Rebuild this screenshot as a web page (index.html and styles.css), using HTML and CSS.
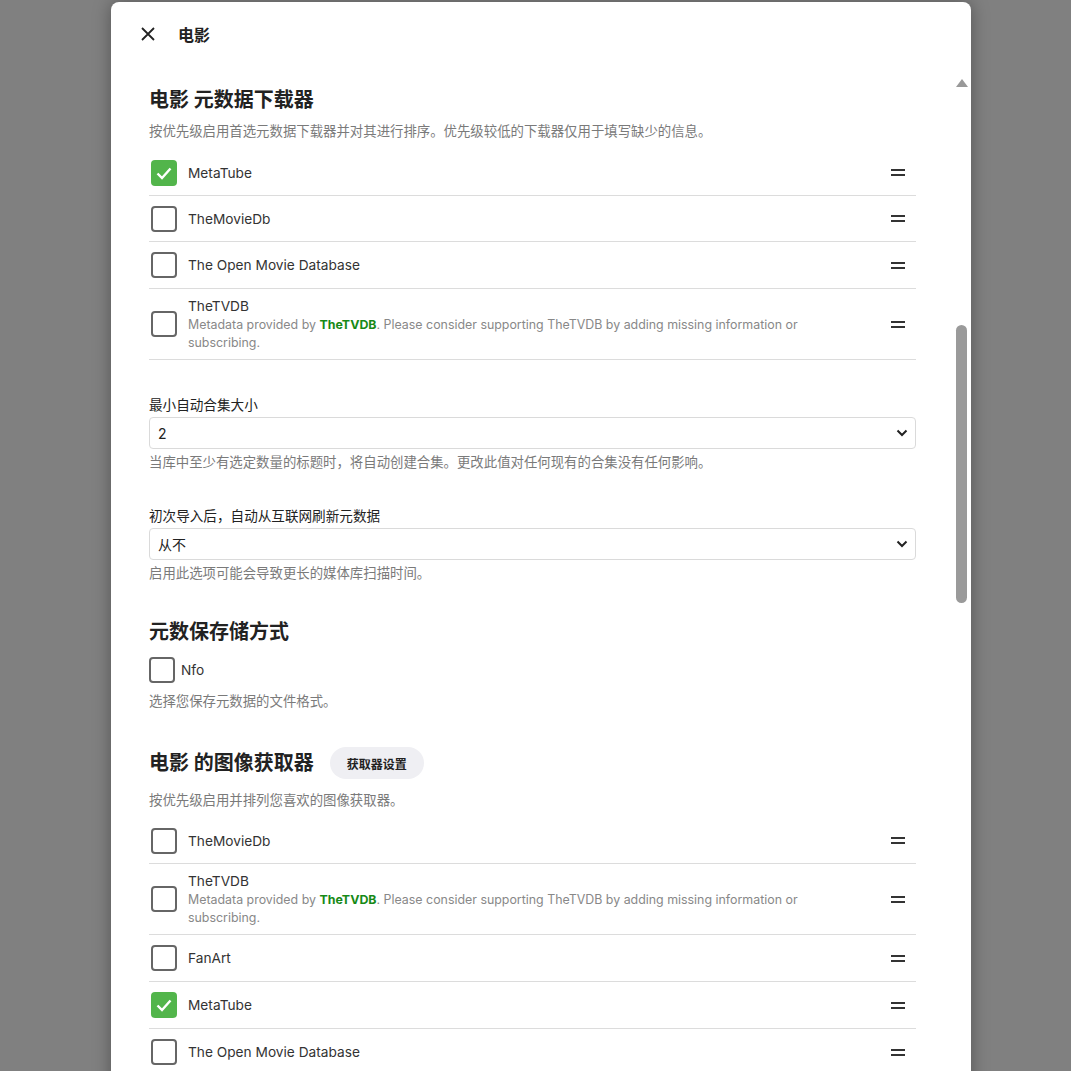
FILE: index.html
```html
<!DOCTYPE html>
<html lang="zh-CN">
<head>
    <meta charset="UTF-8">
    <meta name="viewport" content="width=device-width, initial-scale=1.0">
    <title>电影 - 媒体库设置</title>
    <link rel="stylesheet" href="styles.css">
</head>
<body>

    <div class="dialog">
        <div class="dialog-header">
            <button class="btn-close" type="button" aria-label="关闭">
                <svg width="16" height="16" viewBox="0 0 16 16"><path d="M2 2 L14 14 M14 2 L2 14" stroke="#222" stroke-width="1.8" fill="none"/></svg>
            </button>
            <h2 class="dialog-title">电影</h2>
        </div>

        <!-- fake scrollbar, drawn over the dialog edge -->
        <div class="scroll-arrow"></div>
        <div class="scroll-thumb"></div>

        <div class="dialog-content">

            <h3 class="section-title">电影 元数据下载器</h3>
            <div class="field-desc first">按优先级启用首选元数据下载器并对其进行排序。优先级较低的下载器仅用于填写缺少的信息。</div>

            <div class="check-list">
                <div class="list-item">
                    <span class="checkbox checked"><svg width="20" height="20" viewBox="0 0 20 20"><path d="M3.5 10.5 L8 15 L16.5 5.5" stroke="#fff" stroke-width="2.4" fill="none"/></svg></span>
                    <div class="item-body"><div class="item-name">MetaTube</div></div>
                    <span class="drag-handle"></span>
                </div>
                <div class="list-item">
                    <span class="checkbox"></span>
                    <div class="item-body"><div class="item-name">TheMovieDb</div></div>
                    <span class="drag-handle"></span>
                </div>
                <div class="list-item">
                    <span class="checkbox"></span>
                    <div class="item-body"><div class="item-name">The Open Movie Database</div></div>
                    <span class="drag-handle"></span>
                </div>
                <div class="list-item">
                    <span class="checkbox"></span>
                    <div class="item-body">
                        <div class="item-name">TheTVDB</div>
                        <div class="item-note">Metadata provided by <a class="tvdb-link" href="#">TheTVDB</a>. Please consider supporting TheTVDB by adding missing information or subscribing.</div>
                    </div>
                    <span class="drag-handle"></span>
                </div>
            </div>

            <div class="select-field">
                <label class="field-label">最小自动合集大小</label>
                <div class="select-wrap">
                    <select class="select-box">
                        <option>2</option>
                    </select>
                    <svg class="select-arrow" width="12" height="8" viewBox="0 0 12 8"><path d="M1.5 1.5 L6 6 L10.5 1.5" stroke="#222" stroke-width="2" fill="none"/></svg>
                </div>
                <div class="field-desc">当库中至少有选定数量的标题时，将自动创建合集。更改此值对任何现有的合集没有任何影响。</div>
            </div>

            <div class="select-field">
                <label class="field-label">初次导入后，自动从互联网刷新元数据</label>
                <div class="select-wrap">
                    <select class="select-box">
                        <option>从不</option>
                    </select>
                    <svg class="select-arrow" width="12" height="8" viewBox="0 0 12 8"><path d="M1.5 1.5 L6 6 L10.5 1.5" stroke="#222" stroke-width="2" fill="none"/></svg>
                </div>
                <div class="field-desc">启用此选项可能会导致更长的媒体库扫描时间。</div>
            </div>

            <h3 class="section-title spaced">元数保存储方式</h3>
            <div class="single-check">
                <span class="checkbox"></span>
                <span class="item-name">Nfo</span>
            </div>
            <div class="field-desc after-check">选择您保存元数据的文件格式。</div>

            <div class="title-row">
                <h3 class="section-title">电影 的图像获取器</h3>
                <button class="btn-pill" type="button">获取器设置</button>
            </div>
            <div class="field-desc tight">按优先级启用并排列您喜欢的图像获取器。</div>

            <div class="check-list">
                <div class="list-item">
                    <span class="checkbox"></span>
                    <div class="item-body"><div class="item-name">TheMovieDb</div></div>
                    <span class="drag-handle"></span>
                </div>
                <div class="list-item">
                    <span class="checkbox"></span>
                    <div class="item-body">
                        <div class="item-name">TheTVDB</div>
                        <div class="item-note">Metadata provided by <a class="tvdb-link" href="#">TheTVDB</a>. Please consider supporting TheTVDB by adding missing information or subscribing.</div>
                    </div>
                    <span class="drag-handle"></span>
                </div>
                <div class="list-item">
                    <span class="checkbox"></span>
                    <div class="item-body"><div class="item-name">FanArt</div></div>
                    <span class="drag-handle"></span>
                </div>
                <div class="list-item">
                    <span class="checkbox checked"><svg width="20" height="20" viewBox="0 0 20 20"><path d="M3.5 10.5 L8 15 L16.5 5.5" stroke="#fff" stroke-width="2.4" fill="none"/></svg></span>
                    <div class="item-body"><div class="item-name">MetaTube</div></div>
                    <span class="drag-handle"></span>
                </div>
                <div class="list-item">
                    <span class="checkbox"></span>
                    <div class="item-body"><div class="item-name">The Open Movie Database</div></div>
                    <span class="drag-handle"></span>
                </div>
            </div>

        </div>
    </div>

</body>
</html>
```

FILE: styles.css
```css
/* Page is the dimmed backdrop behind the dialog */
html, body {
    margin: 0;
    padding: 0;
    height: 100%;
    overflow: hidden;
}

body {
    background: #808080;
    font-family: Inter, "Noto Sans CJK SC", sans-serif;
    color: #222;
}

.dialog {
    position: relative;
    width: 860px;
    height: 1200px;
    margin: 2px 0 0 111px;
    background: #fff;
    border-radius: 8px;
    box-shadow: 0 0 18px rgba(0, 0, 0, 0.35);
}

.dialog-header {
    display: flex;
    align-items: center;
    height: 64px;
    padding-left: 26px;
}

.btn-close {
    display: flex;
    align-items: center;
    justify-content: center;
    width: 22px;
    height: 22px;
    padding: 0;
    border: none;
    background: none;
}

.dialog-title {
    margin: 0 0 0 19px;
    font-size: 16px;
    font-weight: 600;
}

/* scrollbar pieces */
.scroll-arrow {
    position: absolute;
    top: 77px;
    left: 845px;
    width: 0;
    height: 0;
    border-left: 6px solid transparent;
    border-right: 6px solid transparent;
    border-bottom: 8px solid #999;
}

.scroll-thumb {
    position: absolute;
    top: 323px;
    left: 845px;
    width: 11px;
    height: 278px;
    border-radius: 6px;
    background: #9a9a9a;
}

.dialog-content {
    width: 767px;
    padding: 20px 0 0 38px;
}

.section-title {
    margin: 0;
    font-size: 20px;
    line-height: 28px;
    font-weight: 700;
}

.section-title.spaced {
    margin-top: 36px;
}

.field-desc {
    font-size: 13.4px;
    line-height: 18px;
    color: #7a7a7a;
    margin-top: 4px;
}

.field-desc.first {
    margin-top: 8px;
    margin-bottom: 10px;
}

.field-desc.after-check {
    margin-top: 9px;
}

.field-desc.tight {
    margin-top: 12px;
    margin-bottom: 9px;
}

/* provider lists */
.list-item {
    display: flex;
    align-items: center;
    box-sizing: border-box;
    min-height: 46px;
    padding: 7px 0;
    border-bottom: 1px solid #dcdcdc;
}

.list-item:nth-child(n+3) {
    min-height: 47px;
}

.checkbox {
    display: flex;
    align-items: center;
    justify-content: center;
    flex: none;
    box-sizing: border-box;
    width: 26px;
    height: 26px;
    margin-left: 2px;
    border: 2px solid #666;
    border-radius: 4px;
}

.checkbox.checked {
    border: none;
    background: #52b54b;
}

.item-body {
    flex: 1;
    margin-left: 11px;
}

.item-name {
    font-size: 13.7px;
    line-height: 20px;
    color: #333;
}

.item-note {
    font-size: 12.4px;
    line-height: 18px;
    color: #888;
    padding-right: 70px;
}

.tvdb-link {
    color: #178a17;
    font-weight: 700;
    text-decoration: none;
}

.drag-handle {
    flex: none;
    box-sizing: border-box;
    width: 14px;
    height: 7px;
    margin-right: 11px;
    border-top: 2px solid #333;
    border-bottom: 2px solid #333;
}

/* select fields */
.select-field {
    margin-top: 35px;
}

.field-label {
    display: block;
    font-size: 13.6px;
    line-height: 20px;
    color: #222;
    margin-bottom: 2px;
}

.select-wrap {
    position: relative;
}

.select-box {
    display: block;
    width: 100%;
    height: 32px;
    padding: 0 8px;
    border: 1px solid #dadada;
    border-radius: 4px;
    background: #fff;
    font-family: inherit;
    font-size: 14px;
    color: #222;
    appearance: none;
    -webkit-appearance: none;
}

.select-arrow {
    position: absolute;
    right: 8px;
    top: 12px;
    pointer-events: none;
}

.single-check {
    display: flex;
    align-items: center;
    margin-top: 11px;
}

.single-check .checkbox {
    margin-left: 0;
    margin-right: 6px;
}

.title-row {
    display: flex;
    align-items: center;
    gap: 16px;
    margin-top: 37px;
}

.btn-pill {
    height: 32px;
    padding: 0 17px;
    border: none;
    border-radius: 16px;
    background: #efeff3;
    font-family: inherit;
    font-size: 12px;
    font-weight: 700;
    color: #222;
}
```
